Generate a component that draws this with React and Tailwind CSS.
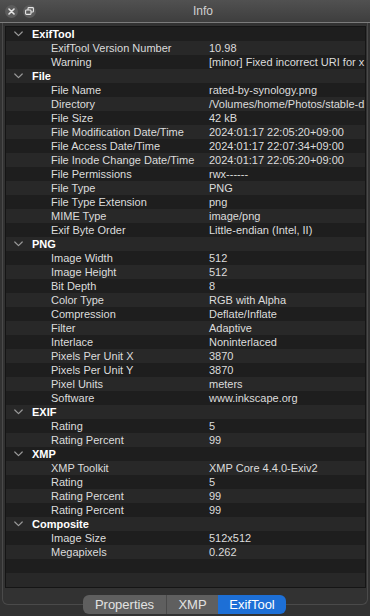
const groups = [
  {
    name: 'ExifTool',
    rows: [
      ['ExifTool Version Number', '10.98'],
      ['Warning', '[minor] Fixed incorrect URI for x'],
    ],
  },
  {
    name: 'File',
    rows: [
      ['File Name', 'rated-by-synology.png'],
      ['Directory', '/Volumes/home/Photos/stable-d'],
      ['File Size', '42 kB'],
      ['File Modification Date/Time', '2024:01:17 22:05:20+09:00'],
      ['File Access Date/Time', '2024:01:17 22:07:34+09:00'],
      ['File Inode Change Date/Time', '2024:01:17 22:05:20+09:00'],
      ['File Permissions', 'rwx------'],
      ['File Type', 'PNG'],
      ['File Type Extension', 'png'],
      ['MIME Type', 'image/png'],
      ['Exif Byte Order', 'Little-endian (Intel, II)'],
    ],
  },
  {
    name: 'PNG',
    rows: [
      ['Image Width', '512'],
      ['Image Height', '512'],
      ['Bit Depth', '8'],
      ['Color Type', 'RGB with Alpha'],
      ['Compression', 'Deflate/Inflate'],
      ['Filter', 'Adaptive'],
      ['Interlace', 'Noninterlaced'],
      ['Pixels Per Unit X', '3870'],
      ['Pixels Per Unit Y', '3870'],
      ['Pixel Units', 'meters'],
      ['Software', 'www.inkscape.org'],
    ],
  },
  {
    name: 'EXIF',
    rows: [
      ['Rating', '5'],
      ['Rating Percent', '99'],
    ],
  },
  {
    name: 'XMP',
    rows: [
      ['XMP Toolkit', 'XMP Core 4.4.0-Exiv2'],
      ['Rating', '5'],
      ['Rating Percent', '99'],
      ['Rating Percent', '99'],
    ],
  },
  {
    name: 'Composite',
    rows: [
      ['Image Size', '512x512'],
      ['Megapixels', '0.262'],
    ],
  },
]

// flatten groups into table rows, pad with two empty rows at the end
const rows = []
groups.forEach((g) => {
  rows.push({ header: g.name })
  g.rows.forEach(([k, v]) => rows.push({ k, v }))
})
rows.push({}, {})

function Chevron() {
  return (
    <svg width="9" height="6" viewBox="0 0 9 6" className="shrink-0">
      <path d="M0.8 1 L4.5 4.6 L8.2 1" fill="none" stroke="#9a9a9a" strokeWidth="1.2" strokeLinecap="round" strokeLinejoin="round" />
    </svg>
  )
}

function Row({ row, index }) {
  const bg = index % 2 === 0 ? 'bg-[#1e1e1e]' : 'bg-[#282828]'
  if (row.header) {
    return (
      <div className={`h-[14px] flex items-center ${bg}`}>
        <div className="w-[26px] shrink-0 flex pl-[8px]">
          <Chevron />
        </div>
        <span className="font-bold text-white">{row.header}</span>
      </div>
    )
  }
  return (
    <div className={`h-[14px] flex items-center whitespace-nowrap overflow-hidden ${bg}`}>
      <span className="w-[203px] shrink-0 pl-[45px] text-[#dcdcdc] overflow-hidden">{row.k}</span>
      <span className="text-[#dcdcdc]">{row.v}</span>
    </div>
  )
}

export default function App() {
  return (
    <div
      className="w-[370px] h-[616px] bg-[#323232] flex flex-col overflow-hidden text-[11px] leading-[14px]"
      style={{ fontFamily: '"Liberation Sans", Arial, sans-serif' }}
    >
      {/* Title bar */}
      <div className="h-[23px] shrink-0 flex items-center border-b border-[#7c7c7c] bg-gradient-to-b from-[#515151] to-[#3e3e3e]">
        <div className="w-[36px] flex items-center gap-[5px] pl-[5px]">
          <div className="w-[13px] h-[13px] rounded-full bg-[#5c5c5c] flex items-center justify-center">
            <svg width="7" height="7" viewBox="0 0 7 7">
              <path d="M1 1 L6 6 M6 1 L1 6" stroke="#e6e6e6" strokeWidth="1.6" strokeLinecap="round" />
            </svg>
          </div>
          <div className="w-[13px] h-[13px] rounded-full bg-[#5c5c5c] flex items-center justify-center">
            <svg width="9" height="8" viewBox="0 0 9 8">
              <rect x="3" y="0.6" width="5.4" height="4.4" rx="0.8" fill="none" stroke="#e6e6e6" strokeWidth="1.1" />
              <rect x="0.6" y="3" width="5.4" height="4.4" rx="0.8" fill="#5c5c5c" stroke="#e6e6e6" strokeWidth="1.1" />
            </svg>
          </div>
        </div>
        <div className="flex-1 text-center text-[12px] text-[#d0d0d0]">Info</div>
      </div>

      {/* Body */}
      <div className="flex-1 flex flex-col px-[2px]">
        <div className="h-[582px] shrink-0 border-x border-b border-[#4a4a4a] rounded-b-[6px] pt-[3px] pl-[2px] pr-[1px]">
          <div className="border border-[#151515]">
            {rows.map((r, i) => (
              <Row key={i} row={r} index={i} />
            ))}
          </div>
        </div>

        {/* Segmented control sitting on the box's bottom edge */}
        <div className="-mt-[10px] flex justify-center">
          <div className="flex h-[19px] rounded-[6px] overflow-hidden text-[13px] leading-[19px] text-[#e2e2e2] ml-[-1px]">
            <div className="w-[83px] bg-[#5f5f5f] text-center">Properties</div>
            <div className="w-[1px] bg-[#4a4a4a]" />
            <div className="w-[51px] bg-[#5f5f5f] text-center">XMP</div>
            <div className="w-[68px] bg-[#1d6fd6] text-white text-center">ExifTool</div>
          </div>
        </div>
      </div>
    </div>
  )
}
